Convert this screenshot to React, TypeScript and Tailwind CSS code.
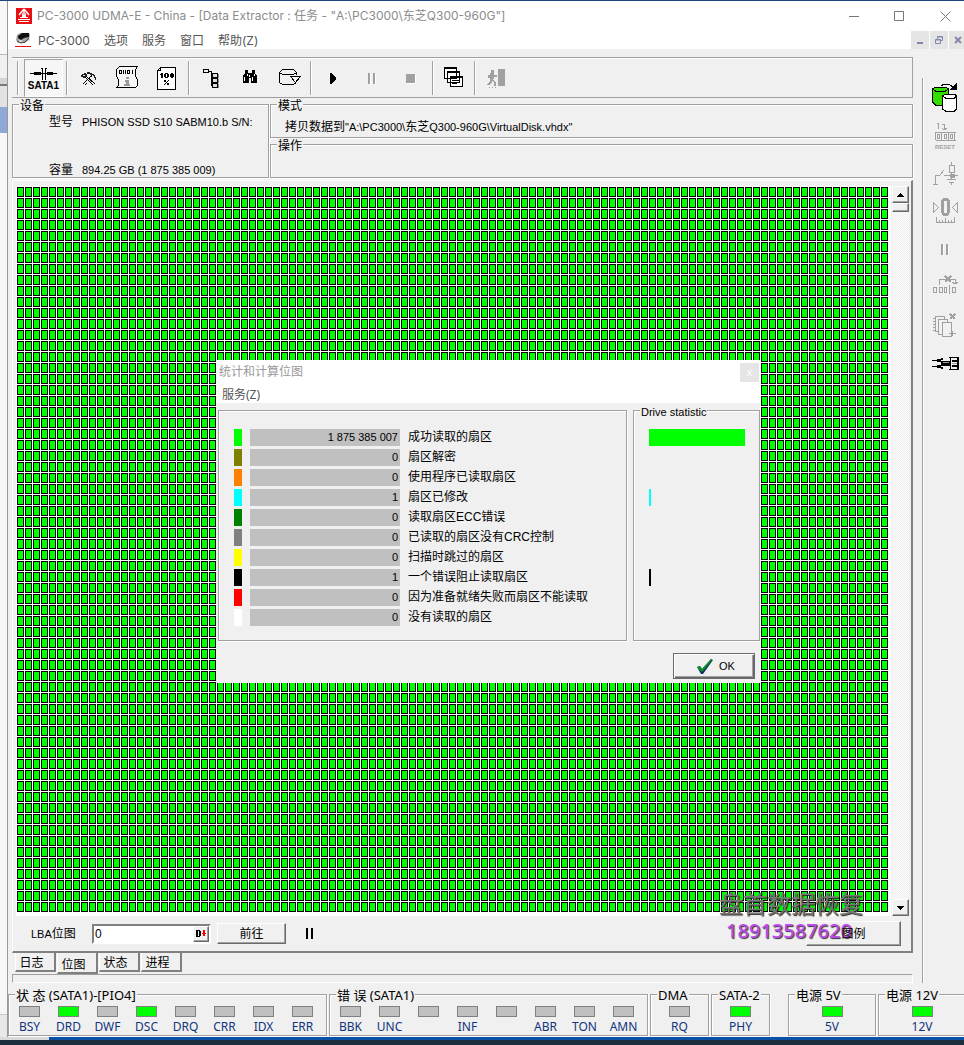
import React, { useState } from 'react';

interface BitmapStat {
  label: string;
  value: string;
  color: string;
  bar: number;
}

interface Led {
  label: string;
  on?: boolean;
}

const stats: BitmapStat[] = [
  { label: '成功读取的扇区', value: '1 875 385 007', color: 'bg-[#00ff00]', bar: 96 },
  { label: '扇区解密', value: '0', color: 'bg-[#808000]', bar: 0 },
  { label: '使用程序已读取扇区', value: '0', color: 'bg-[#ff8000]', bar: 0 },
  { label: '扇区已修改', value: '1', color: 'bg-[#00ffff]', bar: 2 },
  { label: '读取扇区ECC错误', value: '0', color: 'bg-[#008000]', bar: 0 },
  { label: '已读取的扇区没有CRC控制', value: '0', color: 'bg-[#808080]', bar: 0 },
  { label: '扫描时跳过的扇区', value: '0', color: 'bg-[#ffff00]', bar: 0 },
  { label: '一个错误阻止读取扇区', value: '1', color: 'bg-black', bar: 2 },
  { label: '因为准备就绪失败而扇区不能读取', value: '0', color: 'bg-[#ff0000]', bar: 0 },
  { label: '没有读取的扇区', value: '0', color: 'bg-white', bar: 0 }
];

const statusLeds: Led[] = [
  { label: 'BSY' },
  { label: 'DRD', on: true },
  { label: 'DWF' },
  { label: 'DSC', on: true },
  { label: 'DRQ' },
  { label: 'CRR' },
  { label: 'IDX' },
  { label: 'ERR' }
];

const errorLeds: Led[] = [
  { label: 'BBK' },
  { label: 'UNC' },
  { label: '' },
  { label: 'INF' },
  { label: '' },
  { label: 'ABR' },
  { label: 'TON' },
  { label: 'AMN' }
];

const tabs = ['日志', '位图', '状态', '进程'];

/* Shared pieces */

const GroupBox: React.FC<{ title?: string; className?: string; legendClass?: string; children?: React.ReactNode }> = ({
  title,
  className = '',
  legendClass = 'ml-[6px] h-3 leading-4',
  children
}) => (
  <fieldset className={`min-w-0 border border-[#a0a0a0] shadow-[1px_1px_0_#fff,inset_1px_1px_0_#fff] ${className}`}>
    {title && <legend className={`whitespace-nowrap bg-[#f0f0f0] px-px ${legendClass}`}>{title}</legend>}
    {children}
  </fieldset>
);

const LedGroup: React.FC<{ title: string; leds: Led[]; className?: string }> = ({ title, leds, className = '' }) => (
  <GroupBox title={title} className={`h-[49px] shrink-0 ${className}`} legendClass="ml-[6px] h-[14px] text-[13px] leading-4">
    <div className={`flex pt-[5px] ${leds.length > 1 ? 'pl-px' : 'justify-center'}`}>
      {leds.map((led, index) => (
        <div key={index} className="flex w-[39px] shrink-0 flex-col items-center">
          <span className={`h-[11px] w-[21px] border border-[#808080] ${led.on ? 'bg-[#00ff00]' : 'bg-[#c0c0c0]'}`} />
          <span className="h-4 pt-[2px] leading-4 text-[#10357c]">{led.label}</span>
        </div>
      ))}
    </div>
  </GroupBox>
);

const Separator = () => <span className="h-[34px] w-[2px] shrink-0 border-l border-[#a0a0a0] bg-white" />;

const ToolButton: React.FC<{ title: string; disabled?: boolean; children: React.ReactNode }> = ({ title, disabled, children }) => (
  <button type="button" title={title} disabled={disabled} className="h-[38px] w-10 shrink-0">
    <svg width="40" height="38" viewBox="0 0 40 38" fill="none" stroke="#000" shapeRendering="crispEdges">
      {children}
    </svg>
  </button>
);

const SideButton: React.FC<{ title: string; disabled?: boolean; children: React.ReactNode }> = ({ title, disabled, children }) => (
  <button type="button" title={title} disabled={disabled} className="block h-[38px] w-[30px]">
    <svg width="30" height="38" viewBox="0 0 30 38" fill="none" stroke={disabled ? '#a0a0a0' : '#000'} shapeRendering="crispEdges">
      {children}
    </svg>
  </button>
);

const raised =
  'border border-t-white border-l-white border-r-[#696969] border-b-[#696969] bg-[#f0f0f0] shadow-[inset_-1px_-1px_0_#a0a0a0]';

/* Title and menu */

const TitleBar = () => (
  <header className="bg-white font-['Inter','Noto_Sans_CJK_SC',sans-serif]">
    <div className="flex h-[30px] items-center pl-2 text-[#8c8c8c]">
      <svg width="16" height="16" viewBox="0 0 16 16" className="shrink-0">
        <path d="M0 0h16v16H0z" fill="#e60f14" />
        <path d="M8 1 3 7M8 1l5 6M7 4h2M6 6h4" stroke="#fff" strokeWidth="1.500" fill="none" />
        <path d="M6 7h4v2H6zM4 9h8v1H4zM2 11h12v1H2zM3 13h10v1H3z" fill="#fff" />
      </svg>
      <h1 className="ml-[5px] flex-1 truncate">PC-3000 UDMA-E - China - [Data Extractor : 任务 - "A:\PC3000\东芝Q300-960G"]</h1>
      <button type="button" aria-label="最小化" className="flex h-full w-[46px] items-center justify-center">
        <svg width="11" height="11" stroke="#777" fill="none"><path d="M0 5.500h10" /></svg>
      </button>
      <button type="button" aria-label="最大化" className="flex h-full w-[45px] items-center justify-center">
        <svg width="11" height="11" stroke="#777" fill="none"><path d="M.5.5h9v9h-9z" /></svg>
      </button>
      <button type="button" aria-label="关闭" className="-mr-1 flex h-full w-[46px] items-center justify-center">
        <svg width="11" height="11" stroke="#777" fill="none"><path d="m.5.5 10 10m0-10-10 10" /></svg>
      </button>
    </div>
    <nav className="flex h-[18px] items-center pl-[7px] text-[#555]">
      <svg width="16" height="16" viewBox="0 0 16 16" className="shrink-0">
        <path d="M2 3 5 1h9l1 2-1 5-4 3H3L1 8z" fill="#a5a5a5" />
        <path d="m3 4 4-3h7v4L9 6l-3 2-3-2z" fill="#111" />
        <path d="m2 9 4 2 4-1 4-4" stroke="#444" fill="none" />
        <path d="M4 9h3" stroke="#fff" />
        <path d="M0 14h16v1H0z" fill="#e60f14" />
      </svg>
      <div className="flex flex-1 gap-[14px] pl-[7px] pt-[2px]">
        {['PC-3000', '选项', '服务', '窗口', '帮助(Z)'].map(item => (
          <button key={item} type="button" className="leading-4">{item}</button>
        ))}
      </div>
      <div className="-mr-[3px] flex gap-px">
        <button type="button" aria-label="最小化子窗口" className="flex h-[18px] w-[18px] items-center justify-center bg-[#e5e5e5]">
          <svg width="8" height="8"><path d="M1 6h6v2H1z" fill="#8288ad" /></svg>
        </button>
        <button type="button" aria-label="还原子窗口" className="flex h-[18px] w-[18px] items-center justify-center bg-[#e5e5e5]">
          <svg width="8" height="8" fill="none" stroke="#8288ad"><path d="M2.500 3V.5h5v4H5.500M.5 3.500h5v4h-5zM2 1h6M0 4h6" /></svg>
        </button>
        <button type="button" aria-label="关闭子窗口" className="flex h-[18px] w-[18px] items-center justify-center bg-[#e5e5e5]">
          <svg width="8" height="8" stroke="#8288ad" strokeWidth="2"><path d="m1 1 6 6m0-6-6 6" /></svg>
        </button>
      </div>
    </nav>
  </header>
);

const Toolbar = () => (
  <div className="flex h-[41px] items-center overflow-hidden border-y border-r border-[#a0a0a0] pl-[5px] shadow-[inset_0_1px_0_#fff]">
    <Separator />
    <button
      type="button"
      title="SATA1"
      className="mr-[3px] ml-[5px] flex h-[38px] w-[39px] shrink-0 flex-col items-center border border-[#a0a0a0] border-r-white border-b-white bg-[#f6f6f6] pt-[7px]"
    >
      <svg width="27" height="13" viewBox="0 0 27 13" shapeRendering="crispEdges">
        <path d="M0 6h27v1H0zM4 5h7v3H4zM17 5h6v3h-6zM12 1h1v12h-1zM15 1h1v12h-1zM11 1h2v1h-2zM15 1h2v1h-2z" />
      </svg>
      <span className="font-['Liberation_Sans'] text-[10px] font-bold leading-[12px] text-black">SATA1</span>
    </button>
    <Separator />
    <ToolButton title="工具">
      <path d="M14.500 25.500 24 16M16.500 26.500 19 24M16 17l9.500 9.500M18 17l9 8" />
      <path d="M13 16h1v-1h2v-1h2v1h1v2h-1v1h-1v1h-2v-1h-2zM19 13h3v1h2v1h2v1h1v2h1v3h-1v-2h-1v-2h-2v1h-1v-2h-1v-1h-3z" fill="#222" stroke="none" />
      <path d="M15 16h2v1h-2zM24 16h1v1h-1z" fill="#ddd" stroke="none" />
    </ToolButton>
    <ToolButton title="十六进制信息">
      <path d="M11.500 7.500h18l-2 3v6l2 5v5l-2 2h-19l2-2v-5l-2-5v-6z" fill="#f6f6f6" />
      <path d="M11.500 11.500h2v3h-2zM15.500 11v4M17.500 11v4M19.500 11.500h2v3h-2zM24.500 11v4" />
      <path d="M18 18h3v2h-3zM17 21h4v4h1v2h-6v-2h2v-2h-1z" fill="#999" stroke="none" />
    </ToolButton>
    <ToolButton title="任务完成度">
      <path d="M12.500 8.500h15v22h-18v-19z" fill="#fff" />
      <path d="M9 11.500h3.500v-3" />
      <path
        d="M13 14h2v5h-2zM12 15h1v1h-1zM17 14h3v1h1v3h-1v1h-3v-1h-1v-3h1zM18 15v3h1v-3zM23 14h2v1h1v3h-1v1h-2v-1h-1v-3h1zM24 15v3h-0v-3zM16 21h2v2h-2zM20 21h1v1h-1zM19 22h1v1h-1zM18 23h1v1h-1zM17 24h1v1h-1zM16 25h1v1h-1zM19 24h2v2h-2z"
        fill="#000"
        fillRule="evenodd"
        stroke="none"
      />
    </ToolButton>
    <Separator />
    <ToolButton title="对象树">
      <path d="M13.500 10.500h5v3h-5zM18 12.500h3.500v14H24M21 16.500h3M21 21.500h3" />
      <path d="M22.500 14.500h5v4h-5zM22.500 19.500h5v4h-5zM22.500 24.500h5v4h-5z" fill="#ddd" />
      <path d="M28.500 15v4M28.500 20v4M28.500 25v4" stroke="#888" />
    </ToolButton>
    <ToolButton title="搜索">
      <path d="M15 11h3v3h4v-3h3v3l2 3v7h-6v-5h-2v5h-6v-7l2-3z" fill="#000" stroke="none" />
      <path d="M14.500 18v4M17.500 15v2M22.500 18v4M24.500 15v2M19.500 16v2" stroke="#fff" />
    </ToolButton>
    <ToolButton title="磁盘">
      <path d="M9.500 13.500v10l3 2h11l3-2M9.500 13.500l3-3h11l3 3-3 2h-11zM26.500 13v3" />
      <path d="M20.500 17.500h10l-5 6z" fill="#fff" />
    </ToolButton>
    <Separator />
    <ToolButton title="开始">
      <path d="M18 14v11h1l5-5v-1l-5-5z" fill="#000" stroke="none" />
    </ToolButton>
    <ToolButton title="暂停" disabled>
      <path d="M16 14h2v11h-2zM21 14h2v11h-2z" fill="#a0a0a0" stroke="none" />
      <path d="M18.500 15v11M23.500 15v11" stroke="#fff" />
    </ToolButton>
    <ToolButton title="停止" disabled>
      <path d="M15 16h9v9h-9z" fill="#fff" stroke="none" />
      <path d="M14 15h9v9h-9z" fill="#a0a0a0" stroke="none" />
    </ToolButton>
    <Separator />
    <ToolButton title="窗口列表">
      <path d="M10.500 8.500h12v11h-12zM13.500 12.500h12v11h-12zM16.500 17.500h12v10h-12z" fill="#fff" />
      <path d="M10 9.500h12M13 13.500h12M16 18.500h12M18 21.500h8M18 24.500h5" />
    </ToolButton>
    <Separator />
    <ToolButton title="退出" disabled>
      <path d="M22 10h7v17h-7z" fill="#a0a0a0" stroke="none" />
      <path d="M15 11h3v3h-3zM14 14h4v6h-4zM12 16h2v3h-2zM18 16h3v2h-3zM14 20h2v3l-3 3h-2l3-4zM17 20l3 4v3h-2v-3l-3-3z" fill="#a0a0a0" stroke="none" />
      <path d="M13 28h1M16 28h1M19 28h1" stroke="#a0a0a0" />
    </ToolButton>
  </div>
);

const DeviceInfo = () => (
  <div className="flex gap-px">
    <GroupBox title="设备" className="h-[80px] w-[257px] shrink-0">
      <dl className="grid grid-cols-[33px_1fr] gap-y-8 pl-9 pt-1 leading-4">
        <dt>型号</dt>
        <dd className="whitespace-nowrap text-[11px] leading-4">PHISON SSD S10 SABM10.b S/N:</dd>
        <dt>容量</dt>
        <dd className="whitespace-nowrap text-[11px] leading-4">894.25 GB (1 875 385 009)</dd>
      </dl>
    </GroupBox>
    <div className="min-w-0 flex-1">
      <GroupBox title="模式" className="h-[40px]">
        <p className="truncate pl-[14px] pt-[9px] leading-4">
          拷贝数据到<span className="text-[11px]">"A:\PC3000\</span>东芝<span className="text-[11px]">Q300-960G\VirtualDisk.vhdx"</span>
        </p>
      </GroupBox>
      <GroupBox title="操作" className="h-[40px]" />
    </div>
  </div>
);

/* Sector map with its scroll bar and the address row */

const SectorMap = () => (
  <div className="flex gap-px">
    <div className="flex-1 bg-white p-px pr-[3px] pb-[3px]">
      <svg className="block h-[726px] w-full" shapeRendering="crispEdges">
        <defs>
          <pattern id="sector" width="8" height="11" patternUnits="userSpaceOnUse">
            <path d="M0 0h7v10H0z" fill="#000" />
            <path d="M1 1h5v8H1z" fill="#00ff00" />
          </pattern>
        </defs>
        <rect width="100%" height="100%" fill="url(#sector)" />
      </svg>
    </div>
    <div className="flex w-[17px] shrink-0 flex-col bg-[repeating-conic-gradient(#fff_0_25%,#ececec_0_50%)] bg-[length:2px_2px]">
      <button type="button" aria-label="向上滚动" className={`flex h-[17px] items-center justify-center ${raised}`}>
        <svg width="7" height="4" shapeRendering="crispEdges"><path d="M3 0h1v1h1v1h1v1h1v1H0V3h1V2h1V1h1z" /></svg>
      </button>
      <div className={`h-[9px] ${raised}`} />
      <button type="button" aria-label="向下滚动" className={`mt-auto flex h-[17px] items-center justify-center ${raised}`}>
        <svg width="7" height="4" shapeRendering="crispEdges"><path d="M0 0h7v1H6v1H5v1H4v1H3V3H2V2H1V1H0z" /></svg>
      </button>
    </div>
  </div>
);

const AddressRow = () => {
  const [lba, setLba] = useState('0');

  return (
    <div className="flex h-[35px] items-center pl-[15px] pr-2">
      <label htmlFor="lba" className="w-[61px]"><span className="text-[11px]">LBA</span>位图</label>
      <div className="flex h-5 w-[119px] border-2 border-[#808080] border-r-white border-b-white bg-white">
        <input
          id="lba"
          value={lba}
          onChange={(e) => setLba(e.target.value)}
          className="min-w-0 flex-1 bg-transparent pl-px leading-4 outline-none"
        />
        <button type="button" aria-label="十进制" className={`flex w-4 items-center justify-center ${raised}`}>
          <svg width="12" height="9" viewBox="0 0 12 9" className="shrink-0" shapeRendering="crispEdges">
            <path d="M1 1h4v1h1v5H5v1H1zM3 2v5h1V2z" fillRule="evenodd" />
            <path d="M8 1h2v3h1v1h-1v2H8V5H7V4h1z" fill="#f00" />
          </svg>
        </button>
      </div>
      <button type="button" className={`ml-[6px] h-[21px] w-[69px] ${raised}`}>前往</button>
      <button type="button" aria-label="暂停" className="ml-5 flex h-[11px] gap-[3px]">
        <span className="h-full w-[2px] bg-black" />
        <span className="h-full w-[2px] bg-black" />
      </button>
      <div className="relative ml-auto">
        <button type="button" className={`h-[25px] w-[95px] ${raised}`}>
          <span className="relative z-20">图例</span>
        </button>
        <div className="pointer-events-none absolute right-[38px] top-[-30px] z-10 whitespace-nowrap text-center">
          <p className="text-2xl leading-7 text-[#777] [text-shadow:1px_1px_1px_#222]">盘首数据恢复</p>
          <p className="pr-1 font-['Noto_Sans'] text-xl leading-6 font-medium text-[#b94dea] [text-shadow:1px_1px_1px_#333]">18913587620</p>
        </div>
      </div>
    </div>
  );
};

const Tabs = () => {
  const [active, setActive] = useState('位图');

  return (
    <div className="flex h-[21px] items-start pl-[3px]">
      {tabs.map(tab => (
        <button
          key={tab}
          type="button"
          onClick={() => setActive(tab)}
          className={`mr-px w-[41px] border-r-2 border-b-2 border-l border-l-white border-r-[#808080] border-b-[#808080] pr-[7px] ${
            tab === active ? 'h-[21px] bg-[#f0f0f0] pt-[5px]' : 'h-[19px] pt-[3px]'
          } leading-3`}
        >
          {tab}
        </button>
      ))}
    </div>
  );
};

const SideBar = () => (
  <aside className="mt-[29px] ml-[9px] w-[42px] shrink-0 border-l border-[#a0a0a0] pl-[7px] shadow-[inset_1px_0_0_#fff]">
    <SideButton title="复制数据">
      <path d="M2.500 11v13l3 3h10l3-3V11l-3-2h-10z" fill="#33dd00" />
      <path d="M2.500 11l3 2h10l3-2" />
      <path d="M12.500 18v13l3 2h9l2-2V18l-2-2h-9z" fill="#fff" />
      <path d="M12.500 18l3 2h9l2-2M11 8l3-2h5l4 3" />
      <path d="M27 4v8h-8z" fill="#000" stroke="none" />
    </SideButton>
    <SideButton title="复位计数" disabled>
      <path d="M7 7.500h1.500v5M12 8.500h2.500V14M12 12l2 2 3-2" />
      <path d="M5.500 16.500h20M5.500 24.500h20M5.500 16v8M11.500 16v8M18.500 16v8M24.500 16v8M7.500 18.500h2v4h-2zM14.500 18.500h2v4h-2zM20.500 18.500h2v4h-2z" />
      <text x="15" y="33" textAnchor="middle" fill="#a0a0a0" stroke="none" fontFamily="Liberation Sans" fontWeight="bold" fontSize="6">RESET</text>
    </SideButton>
    <SideButton title="电路" disabled>
      <path d="M3 30.500h5M5.500 30v-9H10M10 21l4-5M21.500 8v3M19.500 11.500h5v7h-5zM21.500 18v7M14 21.500h14M17 25.500h9M19 28.500h5M21.500 28v3" />
      <path d="M20 20h4v3h-4z" fill="#a0a0a0" />
    </SideButton>
    <SideButton title="归零" disabled>
      <path d="M3.500 10.500v10l5-5zM27.500 10.500v10l-5-5z" />
      <path d="M13 6h5l2 3v11l-2 4h-5l-2-4V9z" fill="#a0a0a0" stroke="none" />
      <path d="M14 9h3v12h-3z" fill="#f0f0f0" stroke="none" />
      <path d="M6 30.500h19M6.500 25v6M9.500 28v3M12.500 28v3M15.500 26v5M18.500 28v3M21.500 28v3M24.500 25v6" />
    </SideButton>
    <SideButton title="暂停" disabled>
      <path d="M11 14h2v11h-2zM16 14h2v11h-2z" fill="#a0a0a0" stroke="none" />
      <path d="M13.500 15v11M18.500 15v11" stroke="#fff" />
    </SideButton>
    <SideButton title="跳过块" disabled>
      <path d="M3.500 19.500h3v5h-3zM9.500 19.500h3v5h-3zM14.500 19.500h2v5h-2zM19.500 17v9M22.500 19.500h3v5h-3zM9.500 17v-5.500H25V16M22 14l3 2 3-2" />
      <path d="m15 8 6 6m0-6-6 6" strokeWidth="2" />
    </SideButton>
    <SideButton title="删除副本" disabled>
      <path d="M5.500 10.500h9v15h-9zM3 12h2M3 15h2M3 18h2M3 21h2M3 24h2" />
      <path d="M8.500 13.500h9v15h-9z" fill="#f0f0f0" />
      <path d="M12.500 16.500h9v14h-9z" fill="#f0f0f0" />
      <path d="M19 27.500h7M22.500 25v5" />
      <path d="m20 8 5 5m0-5-5 5" strokeWidth="2" />
    </SideButton>
    <SideButton title="接口">
      <path d="M2 16h5v1H2zM2 22h5v1H2zM7 15h4v3H7zM7 21h4v3H7zM11 17h9v5h-9zM11 14h2v2h-2zM11 23h2v2h-2zM20 14h1v11h-1zM22 16h5v2h-5zM22 21h5v2h-5zM19 13h9v1h-9zM19 25h9v1h-9zM27 13h2v13h-2z" fill="#000" stroke="none" />
      <path d="M13 18.500h6M22 19.500h5" stroke="#999" />
    </SideButton>
  </aside>
);

/* Statistics dialog */

const StatisticsDialog: React.FC<{ onClose: () => void }> = ({ onClose }) => (
  <div role="dialog" aria-label="统计和计算位图" className="absolute left-[208px] top-[359px] z-30 w-[544px] bg-[#f0f0f0] pb-1">
    <div className="h-[43px] bg-white">
      <div className="flex h-6 items-center justify-between pl-[3px] pr-px text-[#999]">
        <h2>统计和计算位图</h2>
        <button type="button" aria-label="关闭" onClick={onClose} className="h-[19px] w-[19px] bg-[#e5e5e5] text-[11px] leading-4 text-white">
          x
        </button>
      </div>
      <button type="button" className="ml-[6px] block leading-[22px] text-[#555]">服务(Z)</button>
    </div>

    <div className="flex gap-[6px] pl-[2px] pt-[1px] font-['Liberation_Sans','Noto_Sans_CJK_SC',sans-serif]">
      <div className="flex-1 pt-[6px]">
        <GroupBox className="h-[231px] pl-[7px] pt-[15px]">
          <table className="border-separate border-spacing-x-2 border-spacing-y-[3px]">
            <tbody>
              {stats.map(stat => (
                <tr key={stat.label} className="leading-[17px]">
                  <td className={`h-[17px] w-2 min-w-2 p-0 ${stat.color}`} />
                  <td className="w-[150px] min-w-[150px] bg-[#c0c0c0] p-0 pr-[2px] text-right">
                    <span className="block h-[17px] text-[11px] leading-4">{stat.value}</span>
                  </td>
                  <td className="whitespace-nowrap p-0">
                    <span className="block h-[17px] leading-4">{stat.label}</span>
                  </td>
                </tr>
              ))}
            </tbody>
          </table>
        </GroupBox>
      </div>
      <GroupBox title="Drive statistic" className="h-[237px] w-[127px] shrink-0" legendClass="ml-[6px] h-3 text-[11px] leading-4">
        <div className="flex flex-col gap-[3px] pl-[15px] pt-[13px]">
          {stats.map(stat => (
            <div key={stat.label} className={`h-[17px] ${stat.color}`} style={{ width: stat.bar }} />
          ))}
        </div>
      </GroupBox>
    </div>

    <div className="flex justify-end pr-[5px] pt-3">
      <button
        type="button"
        onClick={onClose}
        className="flex h-[26px] w-[82px] items-center justify-center gap-[6px] border border-[#696969] pl-1 font-['Liberation_Sans'] text-[11px] shadow-[inset_1px_1px_0_#fff,inset_-1px_-1px_0_#696969,inset_-2px_-2px_0_#a0a0a0]"
      >
        <svg width="16" height="15" viewBox="0 0 16 15">
          <path d="M0 8l3-1 2 3L14 0l2 1L6 15H4z" fill="#17306b" />
          <path d="M0 8l3-1 2 3L14 0l1 1L5 13z" fill="#0a9a1c" />
        </svg>
        OK
      </button>
    </div>
  </div>
);

const App: React.FC = () => {
  const [showStatistics, setShowStatistics] = useState(true);

  return (
    <div className="overflow-hidden bg-[#1c2f3e] text-xs text-black">
      <div className="h-px bg-[#1f4478]" />
      <div className="flex font-['Noto_Sans','Noto_Sans_CJK_SC',sans-serif]">
        {/* Edge of the window behind */}
        <div className="flex w-[7px] shrink-0 flex-col bg-[#f7f7f7]">
          <span className="h-[54px] border-b border-[#bbb]" />
          <span className="h-[23px] bg-[#f0f0f0]" />
          <span className="h-[8px] border-b-2 border-[#777] bg-[#d5d5d5]" />
          <span className="h-[21px] bg-[#e2e2e2]" />
          <span className="h-[26px] bg-[#8ea9d6]" />
          <span className="h-[882px] border-b border-[#c8c8c8]" />
          <span className="flex-1 bg-[#e8e8e8]" />
        </div>

        <div className="relative min-w-0 flex-1 border-l border-[#999] bg-[#f0f0f0]">
          <TitleBar />
          <div className="flex">
            <main className="min-w-0 flex-1 pl-1 pt-2 font-['Liberation_Sans','Noto_Sans_CJK_SC',sans-serif]">
              <Toolbar />
              <DeviceInfo />
              <section className="mt-[2px] border-t border-r-2 border-b-2 border-l border-t-white border-l-white border-r-[#808080] border-b-[#808080] pl-[3px] pr-[2px] pt-[5px]">
                <SectorMap />
                <AddressRow />
              </section>
              <Tabs />
              <div className="h-[9px] border border-t-[#a0a0a0] border-l-[#a0a0a0] border-r-white border-b-white" />
            </main>
            <SideBar />
          </div>

          <footer className="flex gap-[2px] pt-1 pb-px">
            <LedGroup title="状 态 (SATA1)-[PIO4]" leds={statusLeds} className="w-[319px]" />
            <LedGroup title="错 误 (SATA1)" leds={errorLeds} className="w-[319px]" />
            <LedGroup title="DMA" leds={[{ label: 'RQ' }]} className="w-[59px]" />
            <LedGroup title="SATA-2" leds={[{ label: 'PHY', on: true }]} className="w-[59px]" />
            <LedGroup title="电源 5V" leds={[{ label: '5V', on: true }]} className="ml-4 w-[88px]" />
            <LedGroup title="电源 12V" leds={[{ label: '12V', on: true }]} className="w-[88px]" />
          </footer>

          {showStatistics && <StatisticsDialog onClose={() => setShowStatistics(false)} />}
        </div>
      </div>

      <div className="flex h-[3px] bg-[#0a50a5]">
        <span className="w-[49px] bg-[#d9d9d9]" />
      </div>
      <div className="h-[5px]" />
    </div>
  );
};

export default App;
